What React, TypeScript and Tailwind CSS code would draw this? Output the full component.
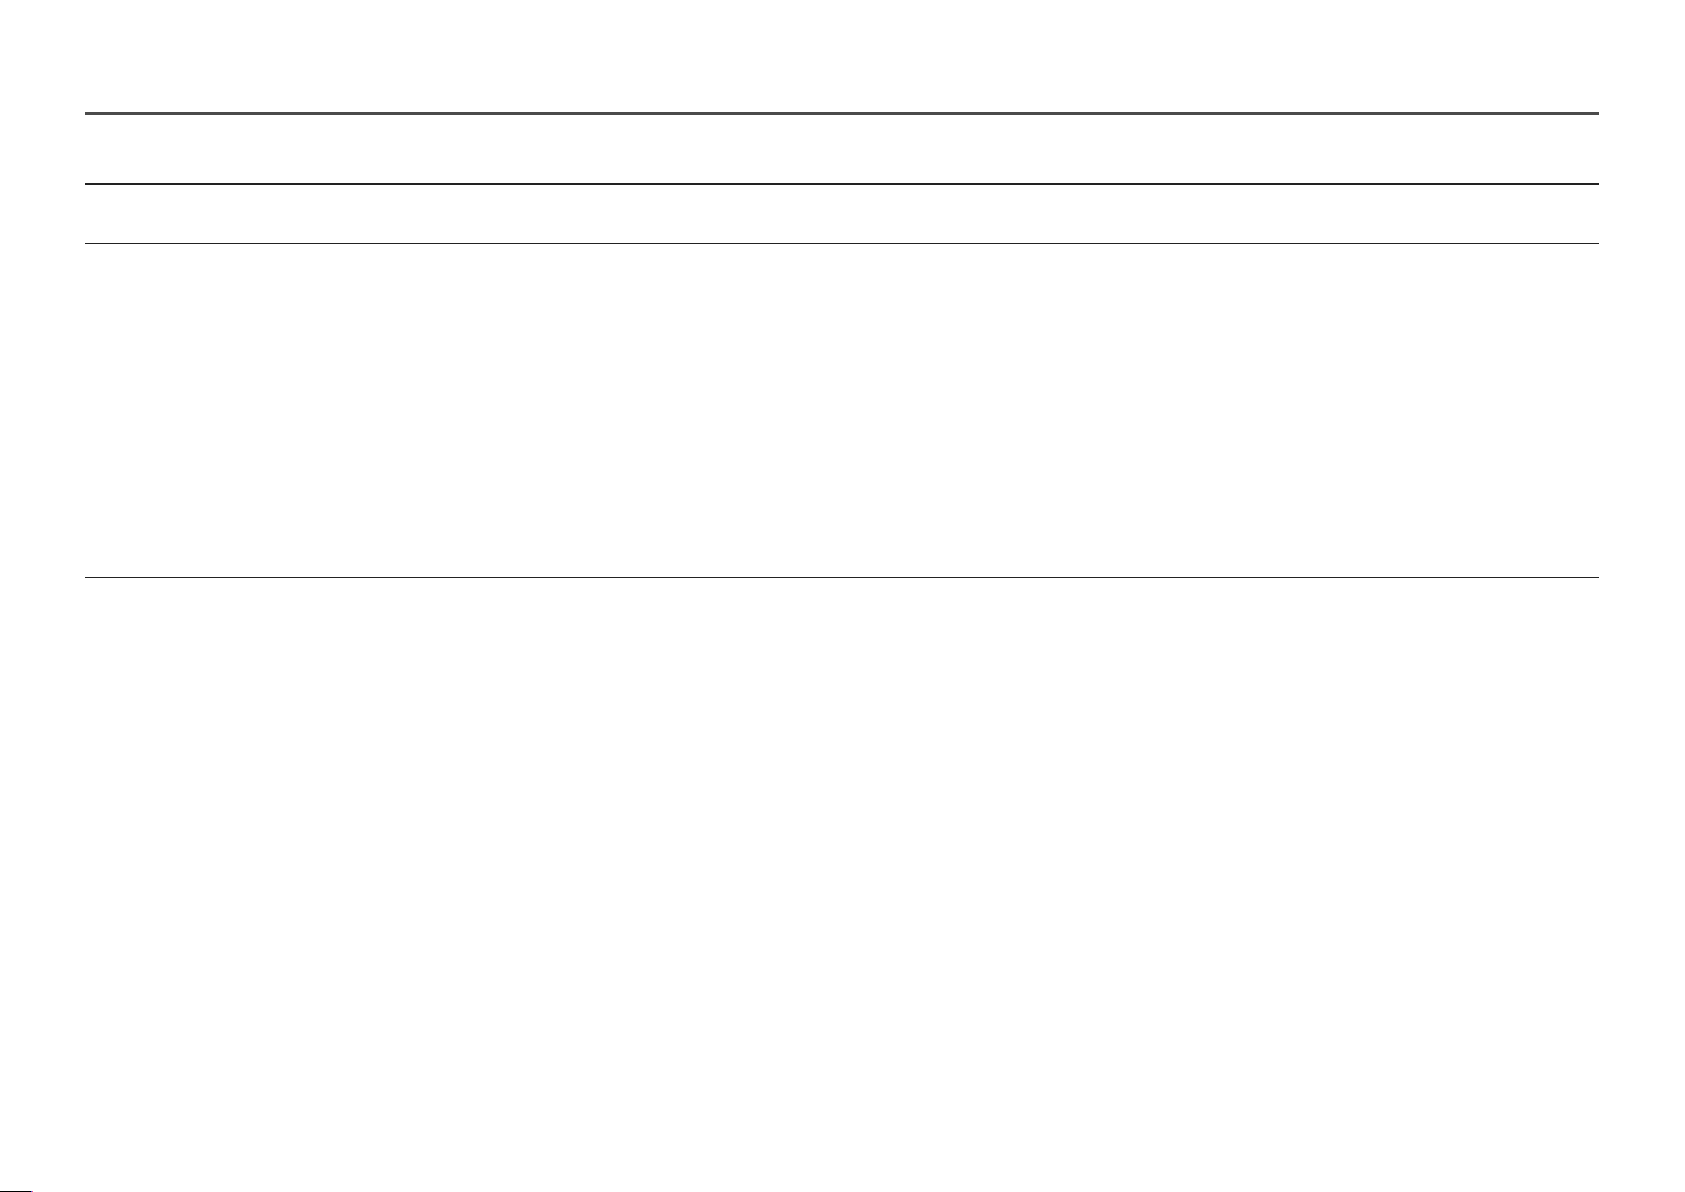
export default function App() {
  return (
    <div className="min-h-[1192px] bg-white font-['Liberation_Sans',sans-serif]">
      <div className="mx-[85px] w-[1514px] pt-[112px]">
        <div className="h-[71px] border-t-[3px] border-[#4b4b4b]" />
        <div className="h-[60px] border-t-2 border-[#222222]" />
        <div className="h-[334px] border-t border-[#222222]" />
        <div className="border-t border-[#222222]" />
      </div>
      <div className="fixed bottom-0 left-0 flex h-px">
        <div className="w-[31px] bg-black" />
        <div className="w-px bg-[#3b5bff]" />
        <div className="w-px bg-[#ff4a7a]" />
      </div>
    </div>
  );
}
